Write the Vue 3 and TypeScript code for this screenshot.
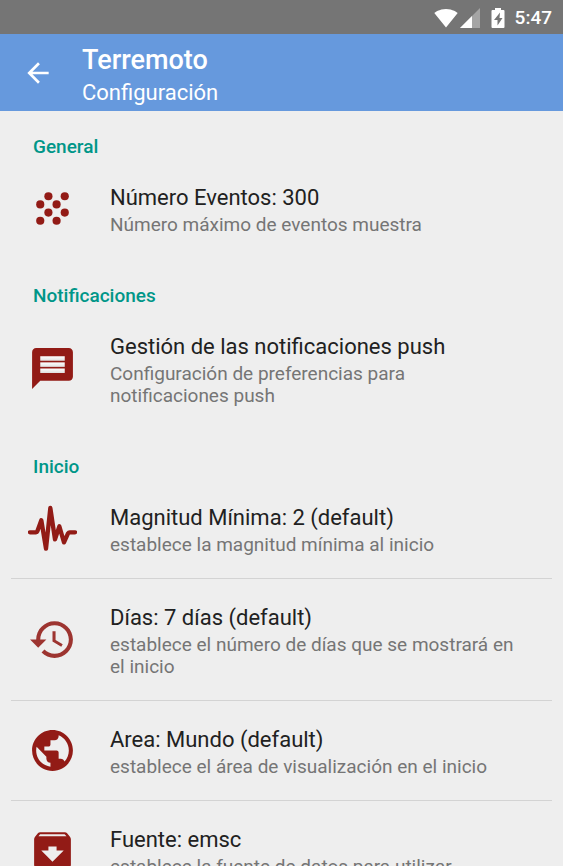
<script setup lang="ts">
type IconName = 'grain' | 'message' | 'pulse' | 'history' | 'globe' | 'archive'

interface Preference {
  icon: IconName
  title: string
  summary: string
}

interface Section {
  heading: string
  items: Preference[]
}

const sections: Section[] = [
  {
    heading: 'General',
    items: [
      { icon: 'grain', title: 'Número Eventos: 300', summary: 'Número máximo de eventos muestra' },
    ],
  },
  {
    heading: 'Notificaciones',
    items: [
      {
        icon: 'message',
        title: 'Gestión de las notificaciones push',
        summary: 'Configuración de preferencias para notificaciones push',
      },
    ],
  },
  {
    heading: 'Inicio',
    items: [
      { icon: 'pulse', title: 'Magnitud Mínima: 2 (default)', summary: 'establece la magnitud mínima al inicio' },
      { icon: 'history', title: 'Días: 7 días (default)', summary: 'establece el número de días que se mostrará en el inicio' },
      { icon: 'globe', title: 'Area: Mundo (default)', summary: 'establece el área de visualización en el inicio' },
      { icon: 'archive', title: 'Fuente: emsc', summary: 'establece la fuente de datos para utilizar' },
    ],
  },
]

const dots: [number, number][] = [
  [10, 6], [18, 6], [6, 10], [14, 10], [10, 14], [18, 14], [6, 18], [14, 18],
]
</script>

<template>
  <div class="screen">
    <div class="status">
      <svg class="status-icon" viewBox="0 0 24 24" aria-hidden="true">
        <path d="M12 21.5 23.7 7C23.2 6.600 18.700 3 12 3S.8 6.600.3 7z" fill="#fff" />
      </svg>
      <svg class="status-icon" viewBox="0 0 24 24" aria-hidden="true">
        <path d="M2 22h20V2z" fill="#fff" fill-opacity=".35" />
        <path d="M2 22h12V10z" fill="#fff" />
      </svg>
      <svg class="battery" viewBox="0 0 14 24" aria-hidden="true">
        <path d="M4 2h6v2h2.500q1 0 1 1v16q0 1-1 1h-11q-1 0-1-1V5q0-1 1-1H4z" fill="#fff" />
        <path d="M9 6.500 3 14h3.500v5.500L11.500 12H8.500z" fill="#757575" />
      </svg>
      <time class="clock">5:47</time>
    </div>

    <header class="toolbar">
      <button class="back" type="button" aria-label="Atrás">
        <svg viewBox="0 0 24 24" aria-hidden="true">
          <path d="M20 11H7.830l5.590-5.590L12 4l-8 8 8 8 1.410-1.410L7.830 13H20v-2z" fill="#fff" />
        </svg>
      </button>
      <div class="names">
        <h1>Terremoto</h1>
        <p>Configuración</p>
      </div>
    </header>

    <main class="list">
      <section v-for="section in sections" :key="section.heading">
        <h2>{{ section.heading }}</h2>
        <ul>
          <li v-for="item in section.items" :key="item.title">
            <button class="row" type="button">
              <svg v-if="item.icon === 'grain'" class="icon" viewBox="0 0 24 24" aria-hidden="true">
                <circle v-for="([x, y], i) in dots" :key="i" :cx="x" :cy="y" r="2" />
              </svg>
              <svg v-else-if="item.icon === 'message'" class="icon" viewBox="0 0 24 24" aria-hidden="true">
                <defs>
                  <linearGradient id="line-shade" x1="0" y1="0" x2="0" y2="1">
                    <stop offset="0" stop-color="#fff" />
                    <stop offset="1" stop-color="#e0e0e0" />
                  </linearGradient>
                </defs>
                <path d="M20 2H4c-1.100 0-1.990.9-1.990 2L2 22l4-4h14c1.100 0 2-.9 2-2V4c0-1.100-.9-2-2-2z" />
                <rect v-for="y in [6, 9, 12]" :key="y" x="6" :y="y" width="12" height="2.2" fill="url(#line-shade)" />
              </svg>
              <svg v-else-if="item.icon === 'pulse'" class="icon pulse" viewBox="24 27 147 147" aria-hidden="true">
                <path d="M30 112H48Q51 112 52 109L64 76 78 161 91 39 105 133 118 94 132 142 144 115Q146 112 149 112H165" />
              </svg>
              <svg v-else-if="item.icon === 'history'" class="icon faded" viewBox="0 0 24 24" aria-hidden="true">
                <path d="M13 3c-4.970 0-9 4.030-9 9H1l3.890 3.890.07.14L9 12H6c0-3.870 3.130-7 7-7s7 3.130 7 7-3.130 7-7 7c-1.930 0-3.680-.79-4.940-2.060l-1.420 1.420C8.270 19.990 10.510 21 13 21c4.970 0 9-4.030 9-9s-4.030-9-9-9zm-1 5v5l4.280 2.540.72-1.210-3.500-2.080V8H12z" />
              </svg>
              <svg v-else-if="item.icon === 'globe'" class="icon" viewBox="0 0 24 24" aria-hidden="true">
                <path d="M12 2C6.480 2 2 6.480 2 12s4.480 10 10 10 10-4.480 10-10S17.520 2 12 2zm-1 17.930c-3.950-.49-7-3.850-7-7.930 0-.62.08-1.210.21-1.790L9 15v1c0 1.100.9 2 2 2v1.930zm6.900-2.540c-.26-.81-1-1.390-1.900-1.390h-1v-3c0-.55-.45-1-1-1H8v-2h2c.55 0 1-.45 1-1V7h2c1.100 0 2-.9 2-2v-.41c2.930 1.190 5 4.060 5 7.410 0 2.080-.8 3.970-2.100 5.390z" />
              </svg>
              <svg v-else class="icon" viewBox="0 0 24 24" aria-hidden="true">
                <path d="M20.540 5.230l-1.390-1.680C18.880 3.210 18.470 3 18 3H6c-.47 0-.88.21-1.160.55L3.460 5.230C3.170 5.570 3 6.020 3 6.500V19c0 1.100.9 2 2 2h14c1.100 0 2-.9 2-2V6.500c0-.48-.17-.93-.46-1.270zM12 17.500L6.500 12H10v-2h4v2h3.500L12 17.500zM5.120 5l.81-1h12l.94 1H5.120z" />
              </svg>
              <span class="text">
                <span class="title">{{ item.title }}</span>
                <span class="summary">{{ item.summary }}</span>
              </span>
            </button>
          </li>
        </ul>
      </section>
    </main>
  </div>
</template>

<style>
body {
  margin: 0;
  background: #eeeeee;
}
</style>

<style scoped>
.screen {
  height: 100vh;
  display: flex;
  flex-direction: column;
  background: #eeeeee;
  color: #212121;
  font-family: Roboto, 'Liberation Sans', sans-serif;
}

h1,
h2,
p,
ul {
  margin: 0;
  padding: 0;
}

.status {
  flex: none;
  box-sizing: border-box;
  height: 34px;
  padding: 2px 11px 0 0;
  display: flex;
  align-items: center;
  justify-content: flex-end;
  background: #757575;
  color: #fff;
}

.status-icon {
  width: 24px;
  height: 24px;
}

.battery {
  width: 14px;
  height: 24px;
  margin: 0 10px 0 9px;
}

.clock {
  font-size: 19px;
  font-weight: 500;
  line-height: 24px;
}

.toolbar {
  flex: none;
  box-sizing: border-box;
  height: 77px;
  padding-left: 22px;
  display: flex;
  align-items: center;
  background: #6699dd;
  color: #fff;
}

.back {
  width: 32px;
  height: 32px;
  padding: 0;
  border: 0;
  background: none;
}

.back svg {
  display: block;
  width: 32px;
  height: 32px;
}

.names {
  margin-left: 28px;
  padding-top: 5px;
}

h1 {
  font-size: 27px;
  font-weight: 500;
  line-height: 34px;
}

.names p {
  font-size: 22px;
  line-height: 31px;
}

.list {
  flex: 1;
  min-height: 0;
  overflow-y: auto;
  scrollbar-width: none;
}

section {
  padding-bottom: 2px;
}

h2 {
  padding: 25px 33px 1px;
  color: #009688;
  font-size: 19px;
  font-weight: 500;
  line-height: 22px;
}

ul {
  list-style: none;
}

li {
  margin: 0 11px;
}

li + li {
  border-top: 1px solid #d3d3d3;
}

.row {
  width: 100%;
  padding: 25px 27px 22px 17px;
  border: 0;
  display: flex;
  align-items: center;
  background: none;
  color: inherit;
  font: inherit;
  text-align: left;
}

.icon {
  flex: none;
  width: 49px;
  height: 49px;
  margin: 0 33px 3px 0;
  fill: #921b16;
}

.pulse {
  fill: none;
  stroke: #921b16;
  stroke-width: 13;
  stroke-linecap: round;
  stroke-linejoin: round;
}

.faded {
  opacity: 0.88;
}

.text {
  flex: 1;
  min-width: 0;
}

.title,
.summary {
  display: block;
}

.title {
  margin-bottom: 2px;
  font-size: 22px;
  line-height: 28px;
}

.summary {
  color: #757575;
  font-size: 19px;
  line-height: 22px;
}
</style>
